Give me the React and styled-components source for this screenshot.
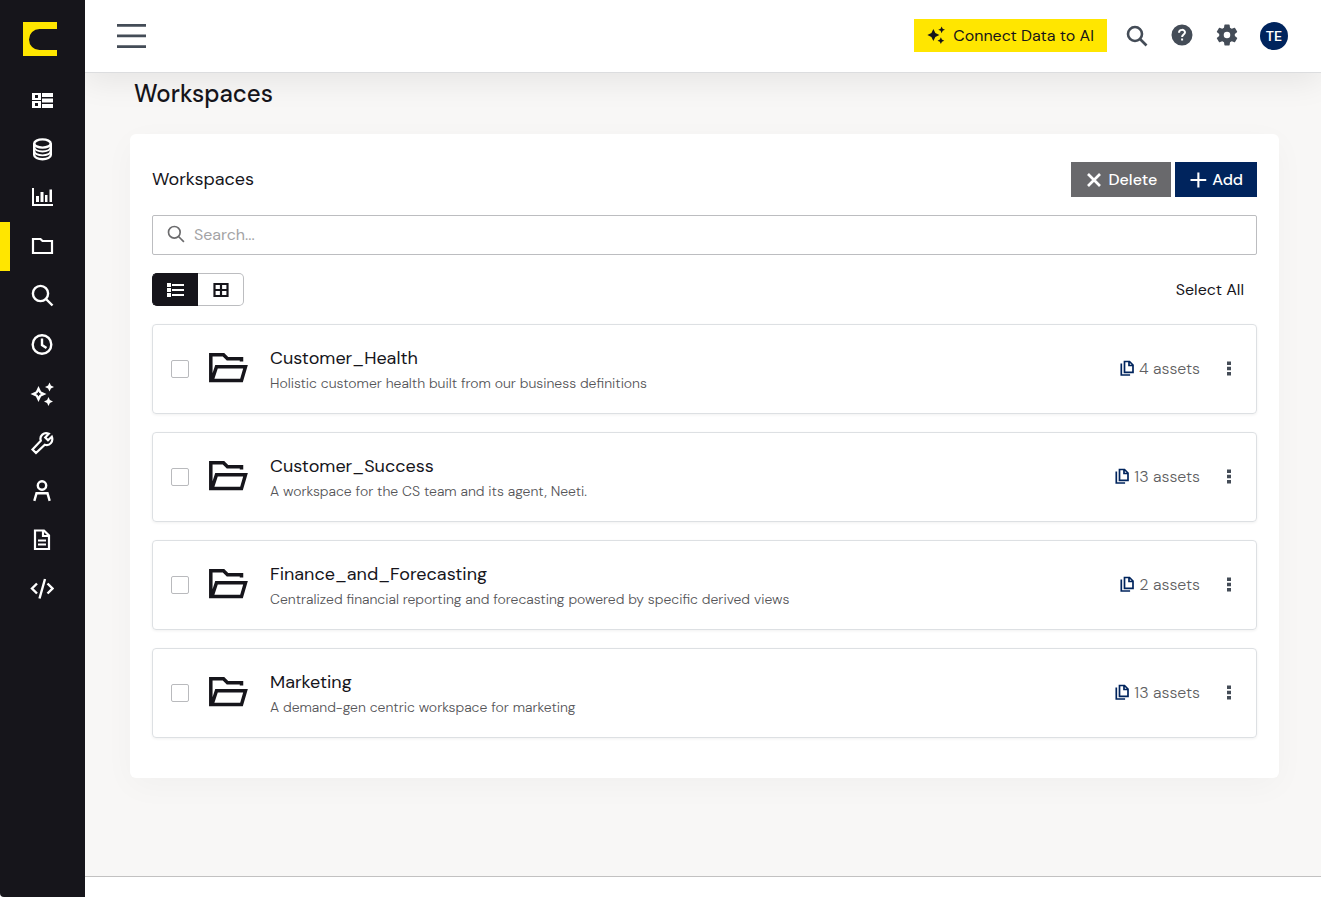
import React, { useState } from "react";
import styled, { createGlobalStyle, css } from "styled-components";

const GlobalStyle = createGlobalStyle`
  *, *::before, *::after { box-sizing: border-box; }
  body {
    margin: 0;
    background: #fff;
    color: #16151b;
    font-family: "DM Sans", Inter, "Liberation Sans", sans-serif;
    font-size: 16px;
  }
  button, input { font: inherit; color: inherit; }
  h1, h2, h3, p, ul { margin: 0; padding: 0; }
  ul { list-style: none; }
`;

const Shell = styled.div`
  display: flex;
  min-height: 100vh;
`;

const Sidebar = styled.nav`
  position: relative;
  z-index: 2;
  flex: 0 0 85px;
  background: #16151b;
  padding-top: 22px;
  border-bottom-left-radius: 4px;
`;

const Brand = styled.a`
  display: block;
  height: 34px;
  margin: 0 28px 19px 23px;
  svg { display: block; }
`;

const NavLink = styled.a`
  display: flex;
  align-items: center;
  justify-content: center;
  height: 49px;
  color: #fff;
  border-left: 10px solid ${(p) => (p.$active ? "#ffe600" : "transparent")};
  padding-right: 12px;
  svg { display: block; }
`;

const Column = styled.div`
  flex: 1;
  min-width: 0;
  display: flex;
  flex-direction: column;
`;

const TopBar = styled.header`
  display: flex;
  align-items: center;
  justify-content: space-between;
  height: 73px;
  padding: 0 33px 0 32px;
  background: #fff;
  border-bottom: 1px solid #dcdddf;
  box-shadow: 0 8px 32px rgba(0, 0, 0, 0.08);
  z-index: 1;
`;

const IconButton = styled.button`
  display: flex;
  padding: 0;
  border: 0;
  background: none;
  color: #444c57;
  cursor: pointer;
`;

const Tools = styled.div`
  display: flex;
  align-items: center;
  gap: 21px;
`;

const RaisedIconButton = styled(IconButton)`
  padding-bottom: 2px;
`;

const ConnectButton = styled.button`
  display: flex;
  align-items: center;
  gap: 8px;
  height: 33px;
  margin: 0 -3px 2px 0;
  padding: 0 13px;
  border: 0;
  background: #ffe600;
  color: #16151b;
`;

const Avatar = styled.button`
  width: 28px;
  height: 28px;
  padding: 0;
  border: 0;
  border-radius: 50%;
  background: #00245d;
  color: #fff;
  font-size: 14px;
  font-weight: 600;
`;

const Main = styled.main`
  flex: 1;
  padding: 5px 42px 98px 45px;
  background: #f8f7f6;
`;

const PageTitle = styled.h1`
  padding-left: 4px;
  margin-bottom: 24px;
  font-size: 24px;
  line-height: 32px;
  font-weight: 550;
`;

const Card = styled.section`
  display: flex;
  flex-direction: column;
  gap: 18px;
  padding: 28px 22px 40px;
  border-radius: 6px;
  background: #fff;
  box-shadow: 0 8px 32px rgba(0, 0, 0, 0.03);
`;

const Bar = styled.div`
  display: flex;
  align-items: center;
  justify-content: space-between;
`;

const CardTitle = styled.h2`
  padding-bottom: 2px;
  font-size: 18px;
  font-weight: 450;
`;

const Actions = styled.div`
  display: flex;
  gap: 4px;
`;

const ActionButton = styled.button`
  display: flex;
  align-items: center;
  gap: 5px;
  height: 35px;
  padding: 0 14px;
  border: 0;
  background: ${(p) => (p.$primary ? "#00245d" : "#69696c")};
  color: #fff;
  font-weight: 500;
`;

const SearchBox = styled.label`
  display: flex;
  align-items: center;
  gap: 8px;
  height: 40px;
  padding: 0 13px 2px;
  border: 1px solid #bcbdc0;
  border-radius: 2px;
  color: #6b6b6d;
`;

const SearchInput = styled.input`
  flex: 1;
  min-width: 0;
  padding: 0;
  border: 0;
  outline: 0;
  background: none;
  color: #16151b;
  &::placeholder { color: #a3a3a5; opacity: 1; }
`;

const Toggle = styled.div`
  display: flex;
  height: 33px;
`;

const ToggleButton = styled.button`
  display: flex;
  align-items: center;
  justify-content: center;
  width: 46px;
  padding: 0;
  border: 1px solid #bcbdc0;
  background: #fff;
  color: #16151b;
  &:first-child { border-radius: 5px 0 0 5px; border-right: 0; }
  &:last-child { border-radius: 0 5px 5px 0; border-left: 0; }
  ${(p) => p.$on && css`
    border-color: #16151b;
    background: #16151b;
    color: #fff;
  `}
`;

const TextButton = styled.button`
  padding: 0 13px;
  border: 0;
  background: none;
`;

const List = styled.ul`
  display: flex;
  flex-direction: column;
  gap: 18px;
`;

const Row = styled.li`
  display: flex;
  align-items: center;
  height: 90px;
  padding: 0 19px 0 18px;
  border: 1px solid #dde0e3;
  border-radius: 4px;
  box-shadow: 0 1px 3px rgba(0, 0, 0, 0.06);
`;

const Check = styled.input`
  appearance: none;
  width: 18px;
  height: 18px;
  margin: 0 20px 0 0;
  border: 1px solid #b9babd;
  border-radius: 2px;
  background: #fff;
  &:checked { background: #00245d; }
`;

const RowText = styled.div`
  flex: 1;
  min-width: 0;
  padding: 2px 0 0 22px;
`;

const RowName = styled.h3`
  font-size: 18px;
  line-height: 26px;
  font-weight: 450;
`;

const RowNote = styled.p`
  font-size: 14px;
  line-height: 24px;
  font-weight: 300;
  color: #555558;
`;

const Assets = styled.span`
  display: flex;
  align-items: center;
  gap: 4px;
  padding-bottom: 2px;
  margin-right: 21px;
  color: #5f5f62;
  font-weight: 300;
  svg { color: #00245d; }
`;

const Footer = styled.footer`
  height: 21px;
  border-top: 1px solid #c2c1c1;
  background: #fff;
`;

function Icon({ size = 24, height, box, children }) {
  return (
    <svg width={size} height={height || size} viewBox={box || "0 0 24 24"} fill="currentColor" aria-hidden="true">
      {children}
    </svg>
  );
}

const line = { fill: "none", stroke: "currentColor", strokeWidth: 2 };
const bold = { ...line, strokeWidth: 2.4 };

const SearchGlyph = ({ size, weight = 2 }) => (
  <Icon size={size}>
    <g {...line} strokeWidth={weight}>
      <circle cx="10" cy="10" r="7" />
      <path d="M15 15l6.5 6.5" />
    </g>
  </Icon>
);

const Sparkles = ({ size, hollow }) => (
  <Icon size={size}>
    <path
      fillRule="evenodd"
      d={"M8.5 4l2.600 5.400L16.500 12l-5.400 2.600L8.500 20l-2.600-5.400L.5 12l5.400-2.600z" + (hollow ? "M8.5 9.500l-.9 1.600-1.600.9 1.600.9.9 1.600.9-1.600 1.600-.9-1.600-.9z" : "")}
    />
    <path d="M19.500 .5l1.400 3.100L24 5l-3.100 1.400L19.500 9.500l-1.400-3.100L15 5l3.100-1.400zM18.500 15l1.400 3.100L23 19.500l-3.100 1.400L18.500 24l-1.400-3.100L14 19.500l3.100-1.400z" />
  </Icon>
);

const navItems = [
  ["Dashboard", <Icon key="i"><path fillRule="evenodd" d="M2 5h9v7H2zM5 7v3h3V7zM2 13h9v7H2zM5 15v3h3v-3zM12 5h11v4H12zM12 10.500h11v4H12zM12 16h11v4H12z" /></Icon>],
  ["Data", <Icon key="i"><g {...bold}><ellipse cx="12.500" cy="6.500" rx="8.300" ry="4.100" /><path d="M4.200 6.500v11.500c0 2.300 3.700 4.200 8.300 4.200s8.300-1.900 8.300-4.200V6.500" /><path strokeWidth="1.900" d="M4.200 10.300c0 2.300 3.700 4.200 8.300 4.200s8.300-1.900 8.300-4.200M4.200 14.200c0 2.300 3.700 4.200 8.300 4.200s8.300-1.900 8.300-4.200" /></g></Icon>],
  ["Analytics", <Icon key="i"><path d="M2 2h2v16h19v2H2zM6 10h3v6H6zM10.500 6h3v10h-3zM15 9h2.500v7H15zM19.500 3.500h2.500V16h-2.500z" /></Icon>],
  ["Workspaces", <Icon key="i"><path {...bold} strokeWidth="2.2" d="M3 4h7.500l2 2H22v12H3z" /></Icon>],
  ["Search", <Icon key="i"><g {...bold}><circle cx="10.500" cy="9.500" r="7.600" /><path d="M16 15l6.500 6.500" /></g></Icon>],
  ["History", <Icon key="i"><g {...bold}><circle cx="12" cy="11.500" r="9.300" /><path d="M12 5.500V12l4.500 3" /></g></Icon>],
  ["AI", <Sparkles key="i" hollow />],
  ["Tools", <Icon key="i"><path {...line} strokeWidth="2.2" d="M21.800 5.700l-3.800 3.600-2.800-2.800 3.600-3.800c-5-2-9.600 2-8 7L2.500 18.500l3.500 3.500 8.800-8.300c5 1.600 8.900-3.200 7-8z" /></Icon>],
  ["Users", <Icon key="i"><g {...bold}><circle cx="12" cy="5.500" r="4.200" /><path d="M4.300 20.800l2.200-7.500h11l2.200 7.500" /></g></Icon>],
  ["Documents", <Icon key="i"><path {...line} strokeWidth="2.200" d="M5 1.500h9L19 6.500V20H5zM13 1.500v5.500H19M8 11.500h8M8 15.500h8" /></Icon>],
  ["Developer", <Icon key="i"><path {...bold} d="M7 5.500L2 10.500l5 5M17.500 5.500l5 5-5 5M15 1L9.500 20.500" /></Icon>],
];

const workspaces = [
  ["Customer_Health", "Holistic customer health built from our business definitions", 4],
  ["Customer_Success", "A workspace for the CS team and its agent, Neeti.", 13],
  ["Finance_and_Forecasting", "Centralized financial reporting and forecasting powered by specific derived views", 2],
  ["Marketing", "A demand-gen centric workspace for marketing", 13],
];

function WorkspaceRow({ name, note, count, checked, onToggle }) {
  return (
    <Row>
      <Check type="checkbox" aria-label={"Select " + name} checked={checked} onChange={onToggle} />
      <Icon size={39} height={32} box="0 0 39 32">
        <path {...line} strokeWidth="3.500" d="M32.500 8.500V5.700H18.500l-4-3.900H1.800v25.600h30.700l4-13.600H7.500L3 27.500" />
      </Icon>
      <RowText>
        <RowName>{name}</RowName>
        <RowNote>{note}</RowNote>
      </RowText>
      <Assets>
        <Icon size={16} box="0 0 16 16">
          <path {...line} strokeWidth="1.700" d="M5.500 1.500h5l3.500 3.500v7.300H5.500zM10 1.500v4h4M2.300 3.500v11.500h8.800" />
        </Icon>
        {count} assets
      </Assets>
      <IconButton type="button" aria-label={"More actions for " + name}>
        <Icon size={16} box="0 0 16 16">
          <path d="M6 .5h4V4H6zM6 5.800h4v3.500H6zM6 11h4v3.500H6z" />
        </Icon>
      </IconButton>
    </Row>
  );
}

export default function App() {
  const [selected, setSelected] = useState([]);
  const [view, setView] = useState("list");
  const [query, setQuery] = useState("");
  const shown = workspaces.filter(([n]) => n.toLowerCase().includes(query.toLowerCase()));
  const toggle = (n) => setSelected((s) => (s.includes(n) ? s.filter((x) => x !== n) : [...s, n]));

  return (
    <>
      <GlobalStyle />
      <Shell>
        <Sidebar aria-label="Main">
          <Brand href="#" aria-label="Home">
            <svg width="34" height="34" viewBox="0 0 34 34" fill="#ffe600">
              <path d="M0 0h34v7H16.500a10.500 10.500 0 0 0 0 21H34v6H0z" />
            </svg>
          </Brand>
          {navItems.map(([label, icon]) => (
            <NavLink key={label} href="#" aria-label={label} $active={label === "Workspaces"}>{icon}</NavLink>
          ))}
        </Sidebar>
        <Column>
          <TopBar>
            <IconButton type="button" aria-label="Toggle menu">
              <Icon size={29} height={24} box="0 0 29 24">
                <path d="M0 0h29v2.800H0zM0 10.500h29v2.800H0zM0 21.200h29V24H0z" />
              </Icon>
            </IconButton>
            <Tools>
              <ConnectButton type="button"><Sparkles size={18} />Connect Data to AI</ConnectButton>
              <IconButton type="button" aria-label="Search"><SearchGlyph size={24} weight={2.600} /></IconButton>
              <RaisedIconButton type="button" aria-label="Help">
                <Icon>
                  <path d="M12 1.500a10.500 10.500 0 1 0 0 21 10.500 10.500 0 0 0 0-21z" />
                  <path d="M9 9.700c0-3.700 6-3.700 6-.4 0 2.100-2.900 2.300-2.900 4.600M12.100 15.500v2" fill="none" stroke="#fff" strokeWidth="2" />
                </Icon>
              </RaisedIconButton>
              <RaisedIconButton type="button" aria-label="Settings">
                <Icon box="1 1 22 22">
                  <path d="M19.140 12.940c.04-.3.060-.610.060-.940s-.020-.640-.070-.940l2.030-1.580a.49.49 0 0 0 .120-.610l-1.920-3.320a.49.49 0 0 0-.590-.220l-2.390.960a7 7 0 0 0-1.620-.940l-.360-2.540a.48.48 0 0 0-.480-.410h-3.840a.47.47 0 0 0-.470.410l-.360 2.540c-.590.240-1.130.570-1.620.940l-2.390-.960a.48.48 0 0 0-.590.220L2.740 8.870a.47.47 0 0 0 .120.610l2.030 1.580a6 6 0 0 0 0 1.880l-2.030 1.580a.49.49 0 0 0-.120.610l1.920 3.320c.120.220.370.290.590.220l2.390-.960c.5.380 1.030.7 1.620.940l.360 2.540c.050.240.240.410.480.410h3.840c.240 0 .440-.170.470-.410l.360-2.540a7 7 0 0 0 1.620-.940l2.390.960c.220.080.470 0 .590-.220l1.920-3.320a.47.47 0 0 0-.120-.610zM12 15a3 3 0 1 1 0-6 3 3 0 0 1 0 6z" />
                </Icon>
              </RaisedIconButton>
              <Avatar type="button">TE</Avatar>
            </Tools>
          </TopBar>
          <Main>
            <PageTitle>Workspaces</PageTitle>
            <Card>
              <Bar>
                <CardTitle>Workspaces</CardTitle>
                <Actions>
                  <ActionButton type="button">
                    <Icon size={18}><path {...line} strokeWidth="3.600" d="M4 4l16 16M20 4L4 20" /></Icon>
                    Delete
                  </ActionButton>
                  <ActionButton type="button" $primary>
                    <Icon size={18}><path {...line} strokeWidth="2.800" d="M12.500 2v20M2 12h21" /></Icon>
                    Add
                  </ActionButton>
                </Actions>
              </Bar>
              <SearchBox>
                <SearchGlyph size={20} />
                <SearchInput type="text" aria-label="Search workspaces" placeholder="Search..." value={query} onChange={(e) => setQuery(e.target.value)} />
              </SearchBox>
              <Bar>
                <Toggle>
                  <ToggleButton type="button" aria-label="List view" $on={view === "list"} onClick={() => setView("list")}>
                    <Icon size={18} box="0 0 18 18"><path d="M0 2h4v4H0zM0 7h4v4H0zM0 12h4v4H0zM5 3h12v2H5zM5 8h12v2H5zM5 13h12v2H5z" /></Icon>
                  </ToggleButton>
                  <ToggleButton type="button" aria-label="Grid view" $on={view === "grid"} onClick={() => setView("grid")}>
                    <Icon size={16} box="0 0 16 16"><path {...line} strokeWidth="2.200" d="M1.500 2h13v12h-13zM8 2v12M1.500 8h13" /></Icon>
                  </ToggleButton>
                </Toggle>
                <TextButton type="button" onClick={() => setSelected(shown.map(([n]) => n))}>Select All</TextButton>
              </Bar>
              <List>
                {shown.map(([name, note, count]) => (
                  <WorkspaceRow key={name} name={name} note={note} count={count} checked={selected.includes(name)} onToggle={() => toggle(name)} />
                ))}
              </List>
            </Card>
          </Main>
          <Footer />
        </Column>
      </Shell>
    </>
  );
}
